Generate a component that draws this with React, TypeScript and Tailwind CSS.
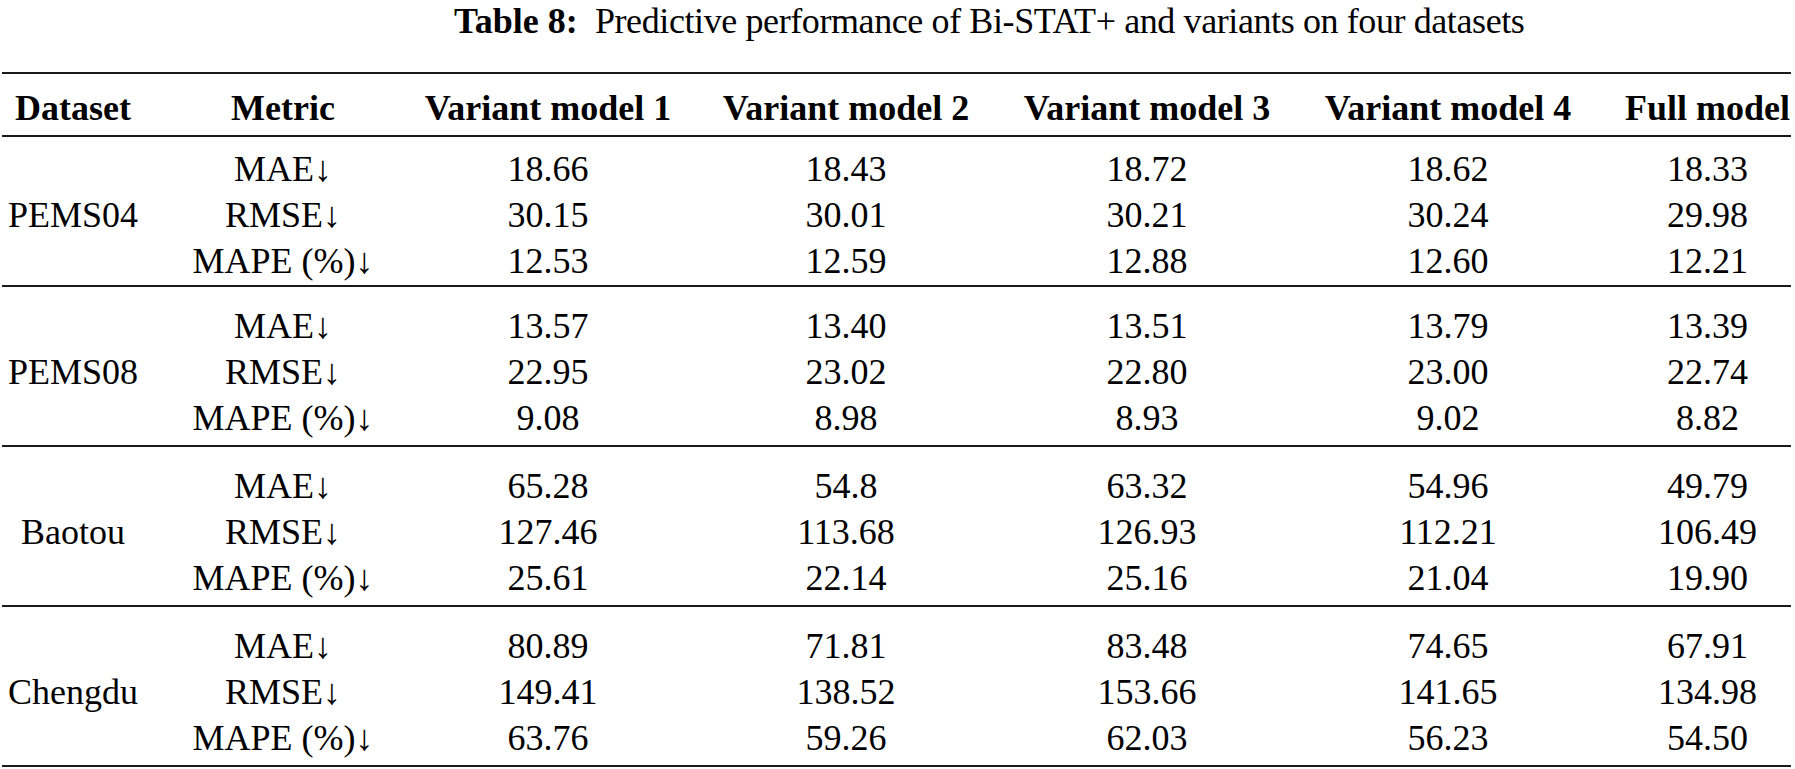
import type { ReactNode } from "react";

type Block = {
  dataset: string;
  rows: { metric: string; values: string[] }[];
};

const COLS = "grid grid-cols-[136px_186px_246px_252px_252px_252px_169px] gap-x-[49px] pl-[3px]";

const BLOCKS: Block[] = [
  {
    dataset: "PEMS04",
    rows: [
      { metric: "MAE↓", values: ["18.66", "18.43", "18.72", "18.62", "18.33"] },
      { metric: "RMSE↓", values: ["30.15", "30.01", "30.21", "30.24", "29.98"] },
      { metric: "MAPE (%)↓", values: ["12.53", "12.59", "12.88", "12.60", "12.21"] },
    ],
  },
  {
    dataset: "PEMS08",
    rows: [
      { metric: "MAE↓", values: ["13.57", "13.40", "13.51", "13.79", "13.39"] },
      { metric: "RMSE↓", values: ["22.95", "23.02", "22.80", "23.00", "22.74"] },
      { metric: "MAPE (%)↓", values: ["9.08", "8.98", "8.93", "9.02", "8.82"] },
    ],
  },
  {
    dataset: "Baotou",
    rows: [
      { metric: "MAE↓", values: ["65.28", "54.8", "63.32", "54.96", "49.79"] },
      { metric: "RMSE↓", values: ["127.46", "113.68", "126.93", "112.21", "106.49"] },
      { metric: "MAPE (%)↓", values: ["25.61", "22.14", "25.16", "21.04", "19.90"] },
    ],
  },
  {
    dataset: "Chengdu",
    rows: [
      { metric: "MAE↓", values: ["80.89", "71.81", "83.48", "74.65", "67.91"] },
      { metric: "RMSE↓", values: ["149.41", "138.52", "153.66", "141.65", "134.98"] },
      { metric: "MAPE (%)↓", values: ["63.76", "59.26", "62.03", "56.23", "54.50"] },
    ],
  },
];

const HEADERS = [
  "Dataset",
  "Metric",
  "Variant model 1",
  "Variant model 2",
  "Variant model 3",
  "Variant model 4",
  "Full model",
];

function Cell({ children, className = "" }: { children: ReactNode; className?: string }) {
  return (
    <div className={`flex justify-center whitespace-nowrap leading-[46px] ${className}`}>
      {children}
    </div>
  );
}

function Rule() {
  return <div className="h-[2px] w-full bg-[#1a1a1a]" />;
}

export default function App() {
  return (
    <div className="h-[769px] w-[1795px] overflow-hidden bg-white font-['Liberation_Serif',serif] text-[36px] text-black">
      <div className="pt-[3px] pl-[454px] leading-[36px] whitespace-nowrap">
        <span className="font-bold">Table 8:</span>
        <span className="tracking-[-0.4px]">&nbsp; Predictive performance of Bi-STAT+ and variants on four datasets</span>
      </div>

      <div className="mt-[33px] ml-[2px] w-[1789px]">
        <Rule />
        <div className={`${COLS} pt-[11px] pb-[4px] font-bold`}>
          {HEADERS.map((h) => (
            <Cell key={h}>{h}</Cell>
          ))}
        </div>
        <Rule />

        {BLOCKS.map((block, i) => (
          <div key={block.dataset}>
            <div className={`${COLS} ${i === 0 ? "pt-[9px] pb-[1px]" : "pt-[16px] pb-[4px]"}`}>
              <Cell className="row-span-3 items-center">{block.dataset}</Cell>
              {block.rows.map((row) => (
                <div key={row.metric} className="contents">
                  <Cell>{row.metric}</Cell>
                  {row.values.map((v, j) => (
                    <Cell key={j}>{v}</Cell>
                  ))}
                </div>
              ))}
            </div>
            <Rule />
          </div>
        ))}
      </div>
    </div>
  );
}
